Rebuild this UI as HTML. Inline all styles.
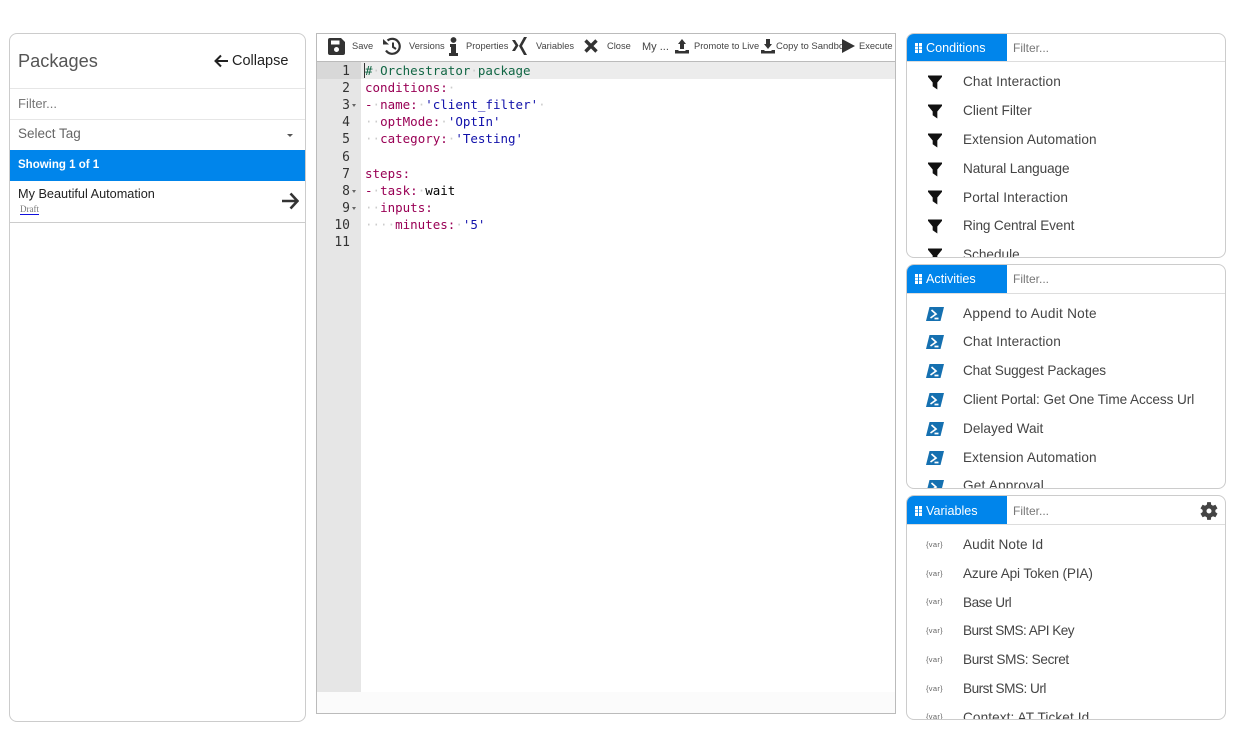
<!DOCTYPE html>
<html><head><meta charset="utf-8"><style>
html,body{margin:0;padding:0;background:#fff;width:1241px;height:734px;overflow:hidden;font-family:"Liberation Sans",sans-serif;color:#333}
.a{position:absolute;white-space:nowrap}
.card{position:absolute;box-sizing:border-box;border:1px solid #ccc;border-radius:8px;background:#fff;overflow:hidden}
.tb{font-size:9.300px;color:#444;top:40px;line-height:12px}
.code{position:absolute;left:365px;font:12.500px/17px "DejaVu Sans Mono",monospace;white-space:pre;color:#000}
.n{position:absolute;left:317px;margin-top:1px;width:33px;text-align:right;font:13px/17px "DejaVu Sans Mono",monospace;color:#333}
.k{color:#905}.s{color:#11a}.c{color:#164}.d{color:#ccc}
.hd{position:absolute;left:0;top:0;width:100px;height:27px;background:#0085eb;color:#fff;font-size:12.600px;line-height:28px}
.hd span{position:absolute;left:19px}
.g{position:absolute;left:8px;top:9px;width:7px;height:10px}
.f{position:absolute;left:106px;top:0;font-size:12px;line-height:28px;color:#777}
.hl{position:absolute;left:0;right:0;top:27px;border-top:1px solid #ddd}
.it{position:absolute;left:56px;margin-top:1px;font-size:13.600px;line-height:16px;color:#444;white-space:nowrap}
.v{position:absolute;left:19px;font-size:7.500px;line-height:10px;color:#666;letter-spacing:.3px}
.ic{position:absolute;left:21px}
.pi{position:absolute;left:19px}
</style></head><body>

<div class="card" style="left:9px;top:33px;width:297px;height:689px">
 <div class="a" style="left:8px;top:15px;font-size:18.200px;line-height:24px;color:#555">Packages</div>
 <svg class="a" style="left:204px;top:20px" width="15" height="14" viewBox="0 0 15 14"><path d="M7 1.500L1.500 7L7 12.500M2 7H14" fill="none" stroke="#222" stroke-width="2"/></svg>
 <div class="a" style="left:222px;top:18px;font-size:14.500px;line-height:18px;color:#222">Collapse</div>
 <div class="a" style="left:0;top:54px;width:297px;border-top:1px solid #e6e6e6"></div>
 <div class="a" style="left:8px;top:61px;font-size:13px;line-height:18px;color:#777">Filter...</div>
 <div class="a" style="left:0;top:85px;width:297px;border-top:1px solid #e6e6e6"></div>
 <div class="a" style="left:8px;top:91px;font-size:13.500px;line-height:18px;color:#666">Select Tag</div>
 <div class="a" style="left:277px;top:100px;width:0;height:0;border-left:3px solid transparent;border-right:3px solid transparent;border-top:3px solid #555"></div>
 <div class="a" style="left:0;top:116px;width:297px;height:31px;background:#0085eb"></div>
 <div class="a" style="left:8px;top:123px;font-size:11.500px;line-height:16px;color:#fff;font-weight:bold">Showing 1 of 1</div>
 <div class="a" style="left:8px;top:152px;font-size:12.700px;line-height:16px;color:#222">My Beautiful Automation</div>
 <div class="a" style="left:10px;top:169px;font:9px/12px 'Liberation Serif',serif;color:#777;border-bottom:1px solid #11d;height:11px">Draft</div>
 <svg class="a" style="left:271px;top:158px" width="18" height="18" viewBox="0 0 18 18"><path d="M9.500 1.500L16.500 9L9.500 16.500M16 9H1" fill="none" stroke="#333" stroke-width="2.600"/></svg>
 <div class="a" style="left:0;top:188px;width:297px;border-top:1px solid #ccc"></div>
</div>

<div style="position:absolute;left:316px;top:33px;width:580px;height:681px;box-sizing:border-box;border:1px solid #bbb;background:#fbfbfb"></div>
<div style="position:absolute;left:317px;top:34px;width:578px;height:28px;background:#fff"></div>
<div style="position:absolute;left:317px;top:61px;width:578px;border-top:1px solid #bbb"></div>
<div style="position:absolute;left:361px;top:62px;width:534px;height:630px;background:#fff"></div>
<div style="position:absolute;left:317px;top:62px;width:44px;height:630px;background:#e6e6e6"></div>
<div style="position:absolute;left:317px;top:62px;width:44px;height:17px;background:#d8d8d8"></div>
<div style="position:absolute;left:361px;top:62px;width:534px;height:17px;background:#ececec"></div>
<div style="position:absolute;left:364px;top:63px;width:1px;height:15px;background:#333"></div>

<svg class="a" style="left:328px;top:38px" width="17" height="17" viewBox="0 0 17 17"><path fill="#333" d="M2 0H13L17 4V15A2 2 0 0 1 15 17H2A2 2 0 0 1 0 15V2A2 2 0 0 1 2 0ZM3 2.500V6.500H11.500V2.500ZM8.500 9A2.500 2.500 0 1 0 8.510 9Z"/></svg>
<div class="a tb" style="left:352px">Save</div>
<svg class="a" style="left:383px;top:37px" width="19" height="19" viewBox="0 0 19 19"><path d="M4.500 3.500A7.500 7.500 0 1 1 3 13.500" fill="none" stroke="#333" stroke-width="2.200"/><path fill="#333" d="M0 2L6 7.500H0Z"/><path d="M10 5.500V10L13 12" fill="none" stroke="#333" stroke-width="2"/></svg>
<div class="a tb" style="left:409px">Versions</div>
<svg class="a" style="left:449px;top:37px" width="9" height="19" viewBox="0 0 9 19"><circle cx="4.500" cy="3" r="2.900" fill="#333"/><path fill="#333" d="M1 7H7V16H9V19H0V16H2V10H1Z"/></svg>
<div class="a tb" style="left:466px">Properties</div>
<svg class="a" style="left:512px;top:37px" width="15" height="18" viewBox="0 0 15 18"><path fill="#333" d="M0 3H3L6.500 8.500L3 14H0L3.500 8.500ZM15 0L10 9L15 18H12L7 9L12 0Z"/></svg>
<div class="a tb" style="left:536px">Variables</div>
<svg class="a" style="left:584px;top:39px" width="14" height="14" viewBox="0 0 14 14"><path d="M1.500 1.500L12.500 12.500M12.500 1.500L1.500 12.500" stroke="#333" stroke-width="3.400"/></svg>
<div class="a tb" style="left:607px">Close</div>
<div class="a" style="left:642px;top:40px;font-size:11px;line-height:14px;color:#444">My ...</div>
<svg class="a" style="left:675px;top:39px" width="14" height="15" viewBox="0 0 14 15"><path fill="#333" d="M7 0L11 5H9V10H5V5H3ZM0 11H3.500V12H10.500V11H14V14.500H0Z"/></svg>
<div class="a tb" style="left:694px">Promote to Live</div>
<svg class="a" style="left:761px;top:39px" width="14" height="15" viewBox="0 0 14 15"><path fill="#333" d="M5 0H9V5H11L7 10L3 5H5ZM0 11H3.500V12H10.500V11H14V14.500H0Z"/></svg>
<div class="a" style="left:776px;top:41px;font-size:9.500px;line-height:12px;color:#444;width:67px;overflow:hidden">Copy to Sandbox</div>
<svg class="a" style="left:842px;top:39px" width="13" height="14" viewBox="0 0 13 14"><path fill="#333" d="M0 0L13 7L0 14Z"/></svg>
<div class="a tb" style="left:859px">Execute</div>

<div class="n" style="top:62px">1</div>
<div class="n" style="top:79px">2</div>
<div class="n" style="top:96px">3</div>
<div class="n" style="top:113px">4</div>
<div class="n" style="top:130px">5</div>
<div class="n" style="top:148px">6</div>
<div class="n" style="top:165px">7</div>
<div class="n" style="top:182px">8</div>
<div class="n" style="top:199px">9</div>
<div class="n" style="top:216px">10</div>
<div class="n" style="top:233px">11</div>
<div class="a" style="left:352px;top:104px;border-left:2.500px solid transparent;border-right:2.500px solid transparent;border-top:3px solid #666"></div>
<div class="a" style="left:352px;top:190px;border-left:2.500px solid transparent;border-right:2.500px solid transparent;border-top:3px solid #666"></div>
<div class="a" style="left:352px;top:207px;border-left:2.500px solid transparent;border-right:2.500px solid transparent;border-top:3px solid #666"></div>

<div class="code" style="top:62px"><span class="c">#<span class="d">·</span>Orchestrator<span class="d">·</span>package</span></div>
<div class="code" style="top:79px"><span class="k">conditions:</span><span class="d">·</span></div>
<div class="code" style="top:96px"><span class="k">-</span><span class="d">·</span><span class="k">name:</span><span class="d">·</span><span class="s">'client_filter'</span><span class="d">·</span></div>
<div class="code" style="top:113px"><span class="d">··</span><span class="k">optMode:</span><span class="d">·</span><span class="s">'OptIn'</span></div>
<div class="code" style="top:130px"><span class="d">··</span><span class="k">category:</span><span class="d">·</span><span class="s">'Testing'</span></div>
<div class="code" style="top:165px"><span class="k">steps:</span></div>
<div class="code" style="top:182px"><span class="k">-</span><span class="d">·</span><span class="k">task:</span><span class="d">·</span>wait</div>
<div class="code" style="top:199px"><span class="d">··</span><span class="k">inputs:</span></div>
<div class="code" style="top:216px"><span class="d">····</span><span class="k">minutes:</span><span class="d">·</span><span class="s">'5'</span></div>

<svg width="0" height="0" style="position:absolute"><defs>
<symbol id="gr" viewBox="0 0 7 10"><path fill="#fff" d="M0 0H3V3H0ZM4 0H7V3H4ZM0 3.500H3V6.500H0ZM4 3.500H7V6.500H4ZM0 7H3V10H0ZM4 7H7V10H4Z"/></symbol>
<symbol id="fu" viewBox="0 0 15 15"><path fill="#111" d="M0 0H15V1.500L10 7.500V15L5 11.500V7.500L0 1.500Z"/></symbol>
<symbol id="ps" viewBox="0 0 18 14"><path fill="#1570b0" d="M3.500 0H18L14.500 14H0Z"/><path d="M5.500 3L10 7L4.500 11M8.500 11.500H12.500" fill="none" stroke="#fff" stroke-width="1.700"/></symbol>
</defs></svg>

<div class="card" style="left:906px;top:33px;width:320px;height:225px">
 <div class="hd"><svg class="g"><use href="#gr"/></svg><span>Conditions</span></div><div class="f">Filter...</div><div class="hl"></div>
 <svg class="ic" style="top:41px" width="14" height="15"><use href="#fu"/></svg><div class="it" style="top:39px;letter-spacing:.12px">Chat Interaction</div>
 <svg class="ic" style="top:70px" width="14" height="15"><use href="#fu"/></svg><div class="it" style="top:68px">Client Filter</div>
 <svg class="ic" style="top:99px" width="14" height="15"><use href="#fu"/></svg><div class="it" style="top:97px;letter-spacing:.11px">Extension Automation</div>
 <svg class="ic" style="top:128px" width="14" height="15"><use href="#fu"/></svg><div class="it" style="top:126px;letter-spacing:-.1px">Natural Language</div>
 <svg class="ic" style="top:156px" width="14" height="15"><use href="#fu"/></svg><div class="it" style="top:155px;letter-spacing:.13px">Portal Interaction</div>
 <svg class="ic" style="top:185px" width="14" height="15"><use href="#fu"/></svg><div class="it" style="top:183px;letter-spacing:-.16px">Ring Central Event</div>
 <svg class="ic" style="top:214px" width="14" height="15"><use href="#fu"/></svg><div class="it" style="top:212px">Schedule</div>
</div>

<div class="card" style="left:906px;top:264px;width:320px;height:225px">
 <div class="hd" style="height:28px;line-height:28px"><svg class="g" style="top:9px"><use href="#gr"/></svg><span>Activities</span></div><div class="f">Filter...</div><div class="hl" style="top:28px"></div>
 <svg class="pi" style="top:42px" width="18" height="14"><use href="#ps"/></svg><div class="it" style="top:40px;letter-spacing:.27px">Append to Audit Note</div>
 <svg class="pi" style="top:70px" width="18" height="14"><use href="#ps"/></svg><div class="it" style="top:68px;letter-spacing:.12px">Chat Interaction</div>
 <svg class="pi" style="top:99px" width="18" height="14"><use href="#ps"/></svg><div class="it" style="top:97px;letter-spacing:-.14px">Chat Suggest Packages</div>
 <svg class="pi" style="top:128px" width="18" height="14"><use href="#ps"/></svg><div class="it" style="top:126px;letter-spacing:-.08px">Client Portal: Get One Time Access Url</div>
 <svg class="pi" style="top:157px" width="18" height="14"><use href="#ps"/></svg><div class="it" style="top:155px">Delayed Wait</div>
 <svg class="pi" style="top:186px" width="18" height="14"><use href="#ps"/></svg><div class="it" style="top:184px;letter-spacing:.11px">Extension Automation</div>
 <svg class="pi" style="top:215px" width="18" height="14"><use href="#ps"/></svg><div class="it" style="top:212px;letter-spacing:.2px">Get Approval</div>
</div>

<div class="card" style="left:906px;top:495px;width:320px;height:225px">
 <div class="hd" style="height:28px;line-height:30px"><svg class="g" style="top:10px"><use href="#gr"/></svg><span>Variables</span></div><div class="f" style="line-height:30px">Filter...</div><div class="hl" style="top:28px"></div>
 <svg class="a" style="left:292px;top:5px" width="20" height="20" viewBox="0 0 24 24"><path fill="#444" d="M19.600 13.200a7.800 7.800 0 0 0 0-2.400l2.600-2-2.500-4.300-3 1.200a7.800 7.800 0 0 0-2.100-1.200L14.200 1.300H9.800l-.4 3.200a7.800 7.800 0 0 0-2.100 1.200l-3-1.200-2.500 4.300 2.600 2a7.800 7.800 0 0 0 0 2.400l-2.600 2 2.500 4.300 3-1.200a7.800 7.800 0 0 0 2.100 1.200l.4 3.200h4.400l.4-3.200a7.800 7.800 0 0 0 2.100-1.200l3 1.200 2.500-4.300ZM12 15a3 3 0 1 1 0-6 3 3 0 0 1 0 6Z"/></svg>
 <div class="v" style="top:44px">{var}</div><div class="it" style="top:40px;letter-spacing:.12px">Audit Note Id</div>
 <div class="v" style="top:73px">{var}</div><div class="it" style="top:69px;letter-spacing:-.14px">Azure Api Token (PIA)</div>
 <div class="v" style="top:101px">{var}</div><div class="it" style="top:98px;letter-spacing:-.5px">Base Url</div>
 <div class="v" style="top:130px">{var}</div><div class="it" style="top:126px;letter-spacing:-.55px">Burst SMS: API Key</div>
 <div class="v" style="top:159px">{var}</div><div class="it" style="top:155px;letter-spacing:-.35px">Burst SMS: Secret</div>
 <div class="v" style="top:188px">{var}</div><div class="it" style="top:184px;letter-spacing:-.5px">Burst SMS: Url</div>
 <div class="v" style="top:216px">{var}</div><div class="it" style="top:213px;letter-spacing:.1px">Context: AT Ticket Id</div>
</div>
</body></html>
